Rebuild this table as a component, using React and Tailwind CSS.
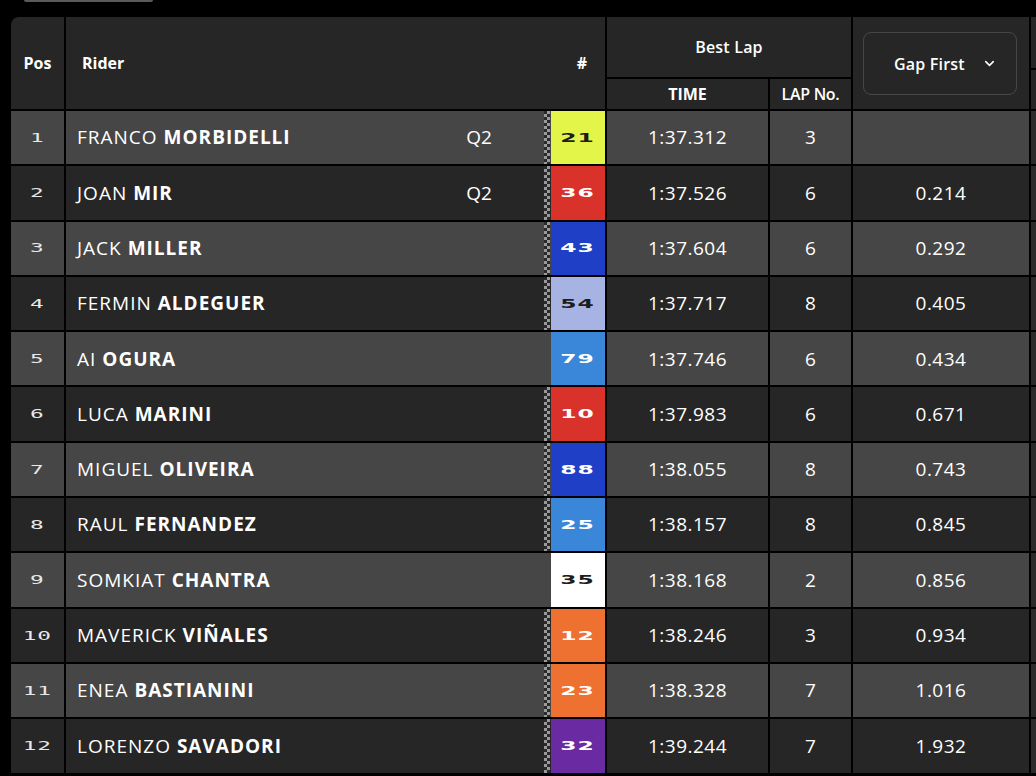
import React from 'react';
import { ChevronDown } from 'lucide-react';

const riders = [
  { pos: 1, first: 'FRANCO', last: 'MORBIDELLI', q: 'Q2', num: '21', bg: 'bg-[#e4f54a]', fg: 'text-[#1d1d1d]', flag: true, time: '1:37.312', lap: 3, gap: '' },
  { pos: 2, first: 'JOAN', last: 'MIR', q: 'Q2', num: '36', bg: 'bg-[#d8322a]', fg: 'text-white', flag: true, time: '1:37.526', lap: 6, gap: '0.214' },
  { pos: 3, first: 'JACK', last: 'MILLER', q: '', num: '43', bg: 'bg-[#1f3fc6]', fg: 'text-white', flag: true, time: '1:37.604', lap: 6, gap: '0.292' },
  { pos: 4, first: 'FERMIN', last: 'ALDEGUER', q: '', num: '54', bg: 'bg-[#a7b3e3]', fg: 'text-[#1d1d1d]', flag: true, time: '1:37.717', lap: 8, gap: '0.405' },
  { pos: 5, first: 'AI', last: 'OGURA', q: '', num: '79', bg: 'bg-[#3a86d8]', fg: 'text-white', flag: false, time: '1:37.746', lap: 6, gap: '0.434' },
  { pos: 6, first: 'LUCA', last: 'MARINI', q: '', num: '10', bg: 'bg-[#d8322a]', fg: 'text-white', flag: true, time: '1:37.983', lap: 6, gap: '0.671' },
  { pos: 7, first: 'MIGUEL', last: 'OLIVEIRA', q: '', num: '88', bg: 'bg-[#1f3fc6]', fg: 'text-white', flag: true, time: '1:38.055', lap: 8, gap: '0.743' },
  { pos: 8, first: 'RAUL', last: 'FERNANDEZ', q: '', num: '25', bg: 'bg-[#3a86d8]', fg: 'text-white', flag: true, time: '1:38.157', lap: 8, gap: '0.845' },
  { pos: 9, first: 'SOMKIAT', last: 'CHANTRA', q: '', num: '35', bg: 'bg-white', fg: 'text-[#1d1d1d]', flag: false, time: '1:38.168', lap: 2, gap: '0.856' },
  { pos: 10, first: 'MAVERICK', last: 'VIÑALES', q: '', num: '12', bg: 'bg-[#ef7131]', fg: 'text-white', flag: true, time: '1:38.246', lap: 3, gap: '0.934' },
  { pos: 11, first: 'ENEA', last: 'BASTIANINI', q: '', num: '23', bg: 'bg-[#ef7131]', fg: 'text-white', flag: true, time: '1:38.328', lap: 7, gap: '1.016' },
  { pos: 12, first: 'LORENZO', last: 'SAVADORI', q: '', num: '32', bg: 'bg-[#6a2ba2]', fg: 'text-white', flag: true, time: '1:39.244', lap: 7, gap: '1.932' },
];

const App = () => {
  return (
    <div className="w-[1036px] h-[776px] bg-black overflow-hidden font-['Open_Sans',sans-serif] text-white">
      {/* leftover control above the table */}
      <div className="ml-[24px] w-[129px] h-[2px] bg-[#5a5a5a] rounded-b-sm"></div>

      <div className="mt-[15px] ml-[11px] grid grid-cols-[53px_539px_161px_81px_176px_40px] grid-rows-[60px_30px] auto-rows-[53.3px] gap-[2px] bg-black w-max">
        {/* Header */}
        <div className="row-span-2 bg-[#262626] rounded-tl-[8px] flex items-center justify-center text-[16px] font-bold">Pos</div>
        <div className="row-span-2 bg-[#262626] flex items-center text-[16px] font-bold">
          <span className="pl-[16px] flex-1">Rider</span>
          <span className="w-[46px] text-center">#</span>
        </div>
        <div className="col-span-2 bg-[#262626] flex items-center justify-center text-[16px] font-semibold tracking-[0.2px]">Best Lap</div>
        <div className="row-span-2 bg-[#262626] flex items-center justify-center">
          <button className="w-[154px] h-[63px] mt-[1px] -ml-[2px] rounded-[8px] border border-[#474747] flex items-center pl-[30px] pr-[19px] text-[16px] font-semibold tracking-[0.2px]">
            <span className="flex-1 text-left">Gap First</span>
            <ChevronDown size={15} strokeWidth={2.5} />
          </button>
        </div>
        <div className="row-span-2 bg-black flex flex-col gap-[2px]">
          <div className="h-[51px] bg-[#262626]"></div>
          <div className="flex-1 bg-[#262626]"></div>
        </div>
        <div className="bg-[#262626] flex items-end justify-center pb-[3px] text-[16px] font-bold">TIME</div>
        <div className="bg-[#262626] flex items-center justify-center text-[16px] font-semibold tracking-[-0.3px]">LAP No.</div>

        {/* Rows */}
        {riders.map((r, i) => {
          const row = i % 2 === 0 ? 'bg-[#464646]' : 'bg-[#262626]';
          return (
            <React.Fragment key={r.pos}>
              <div className={`${row} flex items-center justify-center`}>
                <span className="font-['DejaVu_Sans_Mono',monospace] text-[13px] scale-x-[1.75] tracking-[0.5px] text-[#e8e8e8]">{r.pos}</span>
              </div>
              <div className={`${row} flex items-stretch`}>
                <div className="flex-1 flex items-center pl-[11px] text-[19px] tracking-[1px]">
                  <span>{r.first}&nbsp;</span>
                  <span className="font-bold">{r.last}</span>
                </div>
                <div className="w-[60px] mr-[35px] flex items-center justify-center text-[19px]">{r.q}</div>
                {r.flag ? (
                  <div className="w-[6px] bg-[conic-gradient(#9a9a9a_90deg,#2a2a2a_90deg_180deg,#9a9a9a_180deg_270deg,#2a2a2a_270deg)] bg-size-[6px_6px]"></div>
                ) : (
                  <div className="w-[6px]"></div>
                )}
                <div className={`w-[54px] ml-[1px] ${r.bg} flex items-center justify-center`}>
                  <span className={`font-['DejaVu_Sans',sans-serif] font-bold text-[13px] scale-x-[1.8] tracking-[0.5px] ${r.fg}`}>{r.num}</span>
                </div>
              </div>
              <div className={`${row} flex items-center justify-center text-[19px] tracking-[0.5px]`}>{r.time}</div>
              <div className={`${row} flex items-center justify-center text-[19px]`}>{r.lap}</div>
              <div className={`${row} flex items-center justify-center text-[19px] tracking-[0.5px]`}>{r.gap}</div>
              <div className="bg-[#2b2b2b]"></div>
            </React.Fragment>
          );
        })}
      </div>
    </div>
  );
};

export default App;
